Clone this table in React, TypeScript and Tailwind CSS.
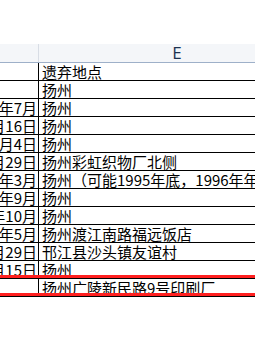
const rows: [string, string][] = [
  ['', '遗弃地点'],
  ['', '扬州'],
  ['年7月', '扬州'],
  ['月16日', '扬州'],
  ['月4日', '扬州'],
  ['月29日', '扬州彩虹织物厂北侧'],
  ['年3月', '扬州（可能1995年底，1996年年'],
  ['年9月', '扬州'],
  ['年10月', '扬州'],
  ['年5月', '扬州渡江南路福远饭店'],
  ['月29日', '邗江县沙头镇友谊村'],
  ['月15日', '扬州'],
  ['', '扬州广陵新民路9号印刷厂'],
];

export default function App() {
  return (
    <div className="relative h-[340px] w-[255px] overflow-hidden bg-white pt-[44px]">
      <div className="w-[313px]">
        {/* column header */}
        <div className="flex h-[19px] border-b border-[#9eb0c9] bg-[#f4f6f9]">
          <div className="w-[39px] shrink-0 border-r border-[#d8dde5]" />
          <div className="flex-1 pl-[2px] text-center font-['Open_Sans',sans-serif] text-[17px] leading-[18px] text-[#1c3350]">
            E
          </div>
        </div>

        {/* sheet rows */}
        {rows.map(([date, place], i) => (
          <div
            key={i}
            className="flex h-[18px] border-b border-black font-['Noto_Sans_CJK_SC',sans-serif] text-[15px] leading-[17px] text-black"
          >
            <div className="flex w-[39px] shrink-0 justify-end overflow-hidden whitespace-nowrap border-r border-black pr-[1px]">
              {date}
            </div>
            <div className="flex-1 overflow-hidden whitespace-nowrap pl-[3px]">{place}</div>
          </div>
        ))}
      </div>

      {/* red highlight box */}
      <div className="absolute left-0 top-[275px] h-[21px] w-full border-y-[3px] border-[#ff2020]" />
    </div>
  );
}
